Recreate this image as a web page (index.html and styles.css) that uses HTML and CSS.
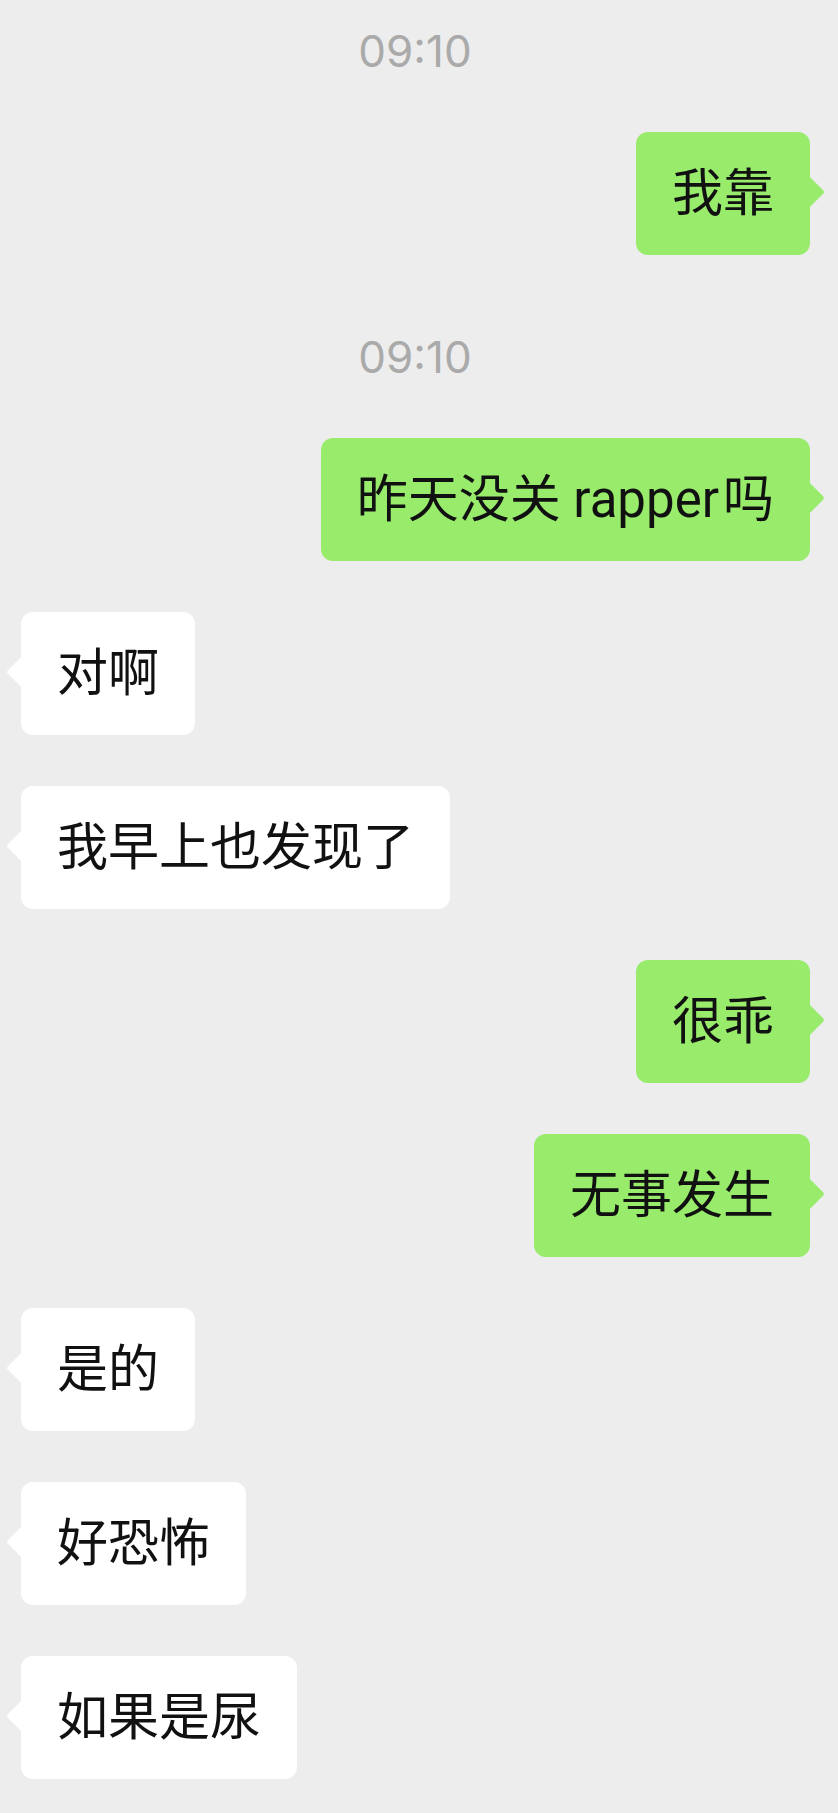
FILE: index.html
```html
<!DOCTYPE html>
<html lang="zh-CN">
<head>
  <meta charset="UTF-8" />
  <title>聊天</title>
  <meta name="viewport" content="width=device-width, initial-scale=1.0" />
  <link rel="stylesheet" href="styles.css">
</head>
<body>
  <div class="chat">
    <div class="time">09:10</div>
    <div class="row me"><div class="bubble">我靠</div></div>

    <div class="time">09:10</div>
    <div class="row me"><div class="bubble">昨天没关 <span class="latin">rapper</span>吗</div></div>
    <div class="row them"><div class="bubble">对啊</div></div>
    <div class="row them"><div class="bubble">我早上也发现了</div></div>
    <div class="row me"><div class="bubble">很乖</div></div>
    <div class="row me"><div class="bubble">无事发生</div></div>
    <div class="row them"><div class="bubble">是的</div></div>
    <div class="row them"><div class="bubble">好恐怖</div></div>
    <div class="row them"><div class="bubble">如果是尿</div></div>
  </div>
</body>
</html>
```

FILE: styles.css
```css
body {
  margin: 0;
  background: #ededed;
  font-family: "Roboto", "Noto Sans CJK SC", sans-serif;
  color: #111;
}
.chat {
  padding-top: 25px;
  padding-bottom: 35px;
}
.time {
  text-align: center;
  padding-right: 8px;
  font-family: "Inter", "Noto Sans", sans-serif;
  font-size: 44px;
  line-height: 52px;
  color: #aaa;
}
.row {
  display: flex;
}
.time + .row {
  margin-top: 55px;
}
.row + .row {
  margin-top: 51px;
}
.row + .time {
  margin-top: 76px;
}
.row.me {
  justify-content: flex-end;
  padding-right: 28px;
}
.row.them {
  justify-content: flex-start;
  padding-left: 21px;
}
.bubble {
  position: relative;
  font-size: 51px;
  line-height: 71px;
  padding: 26px 36px;
  border-radius: 12px;
  background: #fff;
  white-space: nowrap;
}
.bubble::after {
  content: "";
  position: absolute;
  top: 48px;
  width: 24px;
  height: 24px;
  border-radius: 3px;
  background: inherit;
  transform: rotate(45deg);
}
.latin {
  margin-right: 4px;
}
.me .bubble {
  background: #98eb6b;
}
.me .bubble::after {
  right: -10px;
}
.them .bubble::after {
  left: -10px;
}
```
